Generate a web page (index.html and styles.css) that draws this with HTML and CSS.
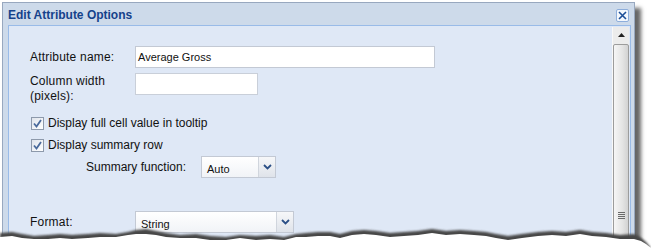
FILE: index.html
```html
<!DOCTYPE html>
<html lang="en">
<head>
    <meta charset="UTF-8">
    <title>Edit Attribute Options</title>
    <link rel="stylesheet" href="styles.css">
</head>
<body>
    <div class="dialog">
        <div class="dialog-header">
            <span class="dialog-title">Edit Attribute Options</span>
            <span class="close-btn">
                <svg width="11" height="11" viewBox="0 0 11 11"><path d="M2 2 L9 9 M9 2 L2 9" stroke="#1d4f98" stroke-width="1.6" fill="none"/></svg>
            </span>
        </div>
        <div class="dialog-body">
            <div class="form">
                <div class="field">
                    <label class="field-label">Attribute name:</label>
                    <div class="text-input wide">Average Gross</div>
                </div>
                <div class="field field-top">
                    <label class="field-label">Column width<br>(pixels):</label>
                    <div class="text-input narrow"></div>
                </div>
                <div class="check-row">
                    <span class="checkbox"><svg width="9" height="9" viewBox="0 0 9 9"><path d="M1 4.5 L3.5 7.5 L8 1" stroke="#4a6a9c" stroke-width="1.8" fill="none"/></svg></span>
                    Display full cell value in tooltip
                </div>
                <div class="check-row">
                    <span class="checkbox"><svg width="9" height="9" viewBox="0 0 9 9"><path d="M1 4.5 L3.5 7.5 L8 1" stroke="#4a6a9c" stroke-width="1.8" fill="none"/></svg></span>
                    Display summary row
                </div>
                <div class="summary-row">
                    <label class="summary-label">Summary function:</label>
                    <div class="combo summary-combo">
                        <span class="combo-text">Auto</span>
                        <span class="combo-trigger"><svg width="9" height="6" viewBox="0 0 9 6"><path d="M1 1 L4.5 4.5 L8 1" stroke="#2b4f86" stroke-width="1.8" fill="none"/></svg></span>
                    </div>
                </div>
                <div class="field format-field">
                    <label class="field-label">Format:</label>
                    <div class="combo format-combo">
                        <span class="combo-text">String</span>
                        <span class="combo-trigger"><svg width="9" height="6" viewBox="0 0 9 6"><path d="M1 1 L4.5 4.5 L8 1" stroke="#2b4f86" stroke-width="1.8" fill="none"/></svg></span>
                    </div>
                </div>
            </div>
            <div class="scrollbar">
                <div class="scroll-up"><svg width="7" height="4" viewBox="0 0 7 4"><path d="M0 4 L3.5 0 L7 4 Z" fill="#222"/></svg></div>
                <div class="scroll-thumb">
                    <span class="grip"></span>
                </div>
            </div>
        </div>
    </div>

    <!-- torn paper edge of the screenshot -->
    <svg class="torn-edge" width="651" height="30" viewBox="0 0 651 30">
        <defs>
            <filter id="soft" x="-5%" y="-50%" width="110%" height="200%">
                <feGaussianBlur stdDeviation="1.2"/>
            </filter>
        </defs>
        <path filter="url(#soft)" fill="#474747" d="M0 15 L12 14 L22 16 L34 18 L48 17 L60 16 L72 17 L88 16 L100 15 L116 16 L128 14 L136 12 L146 11 L156 13 L166 15 L180 17 L196 16 L210 18 L226 19 L240 17 L256 18 L270 17 L284 19 L296 16 L306 15 L318 14 L330 14 L340 16 L352 13 L364 12 L376 13 L390 15 L404 14 L418 13 L432 11 L446 13 L460 12 L474 13 L486 14 L496 16 L508 18 L522 16 L538 14 L552 13 L566 14 L580 12 L592 14 L606 15 L620 17 L634 16 L640 19 L646 24 L651 30 L0 30 Z"/>
        <path fill="#ffffff" d="M0 19 L12 18 L22 20 L34 21 L48 21 L60 20 L72 21 L88 20 L100 19 L116 19 L128 17 L136 16 L146 16 L156 17 L166 19 L180 20 L196 20 L210 22 L226 22 L240 20 L256 22 L270 21 L284 22 L296 19 L306 19 L318 18 L330 18 L340 20 L352 17 L364 16 L376 17 L390 19 L404 18 L418 17 L432 15 L446 17 L460 16 L474 17 L486 18 L496 20 L508 22 L522 20 L538 18 L552 17 L566 18 L580 16 L592 18 L606 19 L620 21 L634 21 L641 23 L646 26 L651 30 L0 30 Z"/>
    </svg>
</body>
</html>
```

FILE: styles.css
```css
html, body {
    margin: 0;
    padding: 0;
    height: 248px;
    overflow: hidden;
    background: #ffffff;
    font-family: "Liberation Sans", Arial, sans-serif;
    font-size: 12px;
    color: #111;
}

body {
    position: relative;
    padding: 2px 0 0 2px;
    box-sizing: border-box;
}

.dialog {
    width: 633px;
    height: 300px;
    box-sizing: border-box;
    border: 1px solid #98a8bf;
    background: #cddaea;
    box-shadow: 6px 6px 4px rgba(0, 0, 0, 0.6);
    display: flex;
    flex-direction: column;
}

.dialog-header {
    height: 22px;
    display: flex;
    align-items: center;
    justify-content: space-between;
    padding: 0 5px 0 5px;
}

.dialog-title {
    font-weight: bold;
    color: #15428b;
    font-size: 12px;
    padding-top: 1px;
}

.close-btn {
    width: 11px;
    height: 11px;
    border: 1px solid #8eaedb;
    border-radius: 2px;
    background: #f4f8fd;
    display: flex;
    align-items: center;
    justify-content: center;
    margin-top: 2px;
}

.dialog-body {
    flex: 1;
    margin: 0 3px 0 5px;
    border: 1px solid #99bbe8;
    background: #dfe8f6;
    display: flex;
}

.form {
    flex: 1;
    padding: 20px 0 0 21px;
}

.field {
    display: grid;
    grid-template-columns: 105px auto;
    align-items: center;
    margin-bottom: 5px;
}

.field-top {
    align-items: start;
    margin-bottom: 8px;
}

.field-top .field-label {
    padding-top: 1px;
}

.field-label {
    line-height: 15px;
    letter-spacing: 0.2px;
}

.text-input {
    box-sizing: border-box;
    height: 22px;
    border: 1px solid #c3c9d4;
    background: #ffffff;
    font-size: 11px;
    line-height: 20px;
    padding-left: 2px;
}

.text-input.wide {
    width: 300px;
}

.text-input.narrow {
    width: 123px;
    border-color: #c9cfd9;
}

.check-row {
    display: flex;
    align-items: center;
    height: 22px;
    gap: 4px;
    padding-left: 1px;
}

.checkbox {
    width: 11px;
    height: 11px;
    border: 1px solid #8d99ab;
    background: linear-gradient(135deg, #dfe4ec, #ffffff);
    display: flex;
    align-items: center;
    justify-content: center;
}

.summary-row {
    display: flex;
    align-items: center;
    padding-left: 56px;
    height: 22px;
}

.summary-label {
    width: 115px;
}

.combo {
    height: 22px;
    box-sizing: border-box;
    border: 1px solid #c3c9d4;
    background: linear-gradient(#ffffff, #f1f3f7);
    display: flex;
    align-items: center;
    justify-content: space-between;
}

.combo-text {
    font-size: 11px;
    padding: 3px 0 0 5px;
}

.combo-trigger {
    width: 16px;
    height: 20px;
    border-left: 1px solid #d0d5dd;
    background: linear-gradient(#f6f7f9, #dfe3ea);
    display: flex;
    align-items: center;
    justify-content: center;
}

.summary-combo {
    width: 75px;
}

.format-combo {
    width: 159px;
}

.format-field {
    margin-top: 33px;
}

.scrollbar {
    width: 16px;
    margin: 1px 1px 0 0;
    background: #ececec;
    border-left: 1px solid #f8f8f8;
    display: flex;
    flex-direction: column;
}

.scroll-up {
    height: 16px;
    display: flex;
    align-items: center;
    justify-content: center;
}

.scroll-thumb {
    flex: 1;
    margin: 1px 0 0 0;
    border: 1px solid #9c9c9c;
    border-radius: 2px;
    background: linear-gradient(90deg, #f6f6f6, #e4e4e4 60%, #d2d2d2);
    position: relative;
}

.grip {
    position: absolute;
    left: 4px;
    top: 167px;
    width: 7px;
    height: 7px;
    background: repeating-linear-gradient(#6a6a6a 0 1px, transparent 1px 2px);
}

.torn-edge {
    position: absolute;
    left: 0;
    bottom: 0;
}
```
